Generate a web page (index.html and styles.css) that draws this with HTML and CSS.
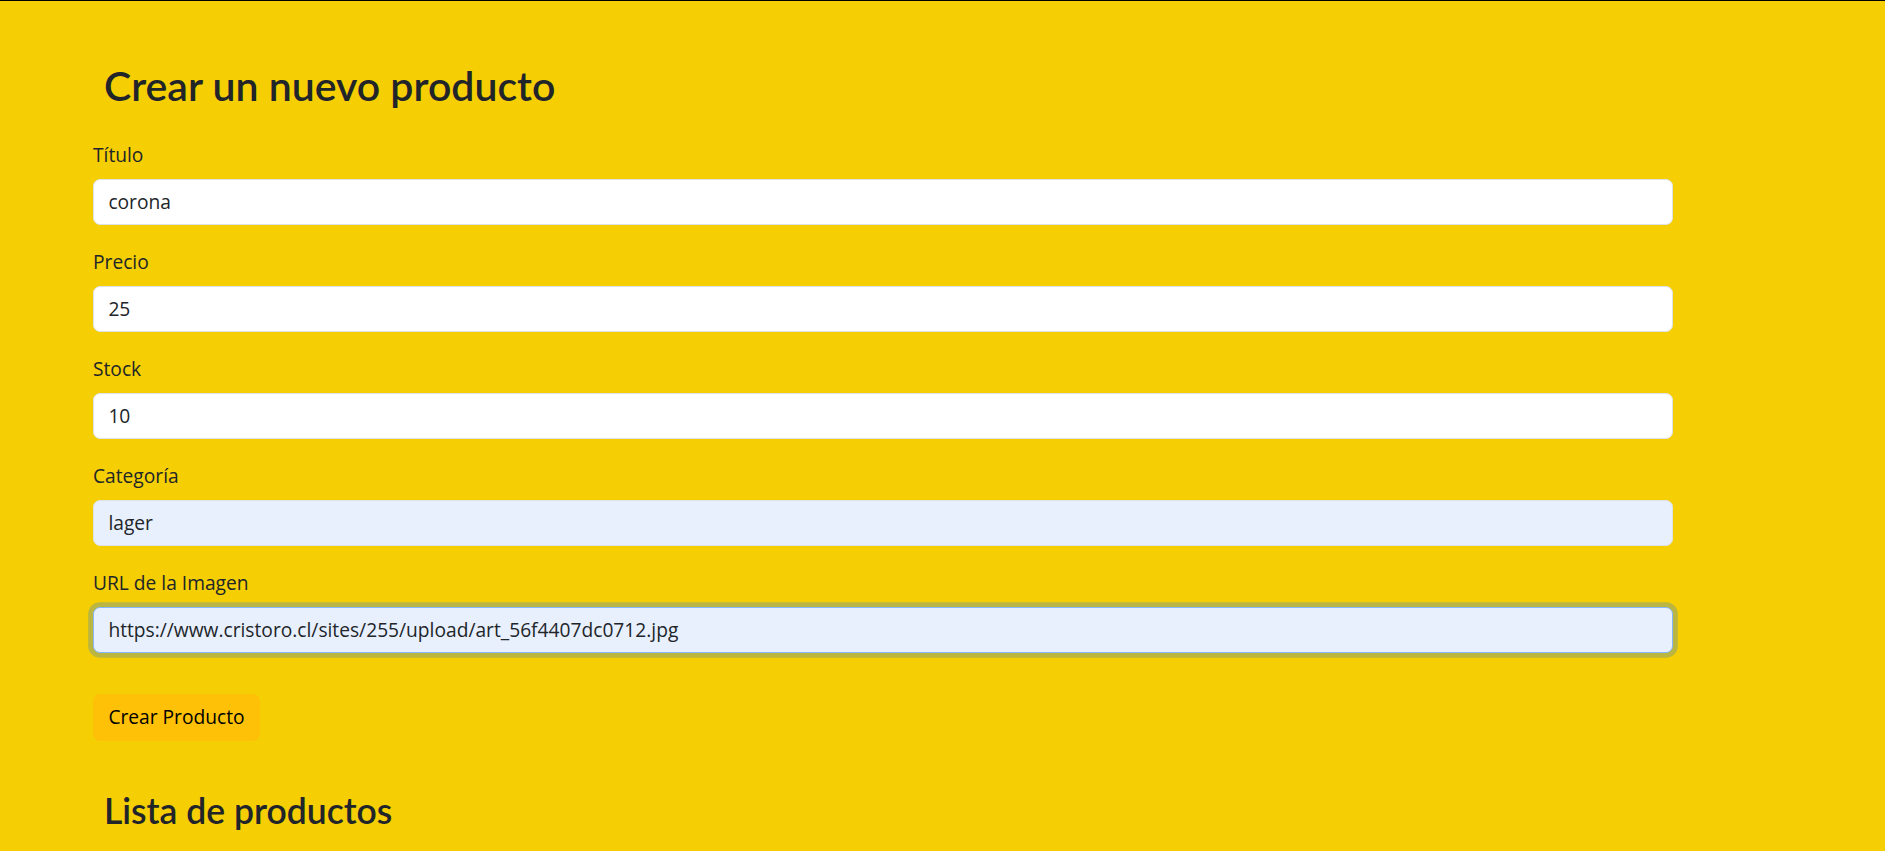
FILE: index.html
```html
<!DOCTYPE html>
<html lang="es">
<head>
<meta charset="utf-8">
<title>Productos</title>
<link rel="stylesheet" href="styles.css">
</head>
<body>
<div class="page">
  <h1 class="title">Crear un nuevo producto</h1>
  <form class="form">
    <div class="group">
      <label class="label">Título</label>
      <input class="control" type="text" value="corona">
    </div>
    <div class="group">
      <label class="label">Precio</label>
      <input class="control" type="text" value="25">
    </div>
    <div class="group">
      <label class="label">Stock</label>
      <input class="control" type="text" value="10">
    </div>
    <div class="group">
      <label class="label">Categoría</label>
      <input class="control autofill" type="text" value="lager">
    </div>
    <div class="group">
      <label class="label">URL de la Imagen</label>
      <input class="control autofill focused" type="text" value="https://www.cristoro.cl/sites/255/upload/art_56f4407dc0712.jpg">
    </div>
    <button class="btn" type="button">Crear Producto</button>
  </form>
  <h2 class="subtitle">Lista de productos</h2>
</div>
</body>
</html>
```
FILE: styles.css
```css
html, body {
  margin: 0;
  padding: 0;
}
body {
  background: #f5ce03;
  border-top: 1px solid #000;
  font-family: "Open Sans", "Noto Sans", sans-serif;
  color: #212529;
  font-size: 19.2px;
  line-height: 1.5;
  height: 850px;
  overflow: hidden;
}
.page {
  padding: 0 0 0 93px;
}
.title {
  margin: 0;
  padding: 60px 0 0 11px;
  font-family: Lato, "Open Sans", sans-serif;
  font-size: 41px;
  font-weight: 600;
  line-height: 49.2px;
}
.form {
  width: 1580px;
  margin-top: 30.4px;
}
.group {
  margin-bottom: 22.6px;
}
.label {
  display: block;
  margin-bottom: 9.6px;
}
.control {
  display: block;
  box-sizing: border-box;
  width: 100%;
  height: 46px;
  padding: 0 14.4px;
  font: inherit;
  color: #212529;
  background: #fff;
  border: 1.2px solid #dee2e6;
  border-radius: 7px;
  outline: none;
}
.autofill {
  background: #e8f0fe;
}
.focused {
  border-color: #86b7fe;
  box-shadow: 0 0 0 4.8px rgba(13, 110, 253, 0.25);
}
.btn {
  display: block;
  margin-top: 41px;
  height: 47px;
  padding: 0 14.4px;
  font: inherit;
  color: #000;
  background: #ffc107;
  border: 1.2px solid #ffc107;
  border-radius: 7px;
}
.subtitle {
  margin: 49px 0 0 11px;
  font-family: Lato, "Open Sans", sans-serif;
  font-size: 35.5px;
  font-weight: 600;
  line-height: 42.6px;
}
```
